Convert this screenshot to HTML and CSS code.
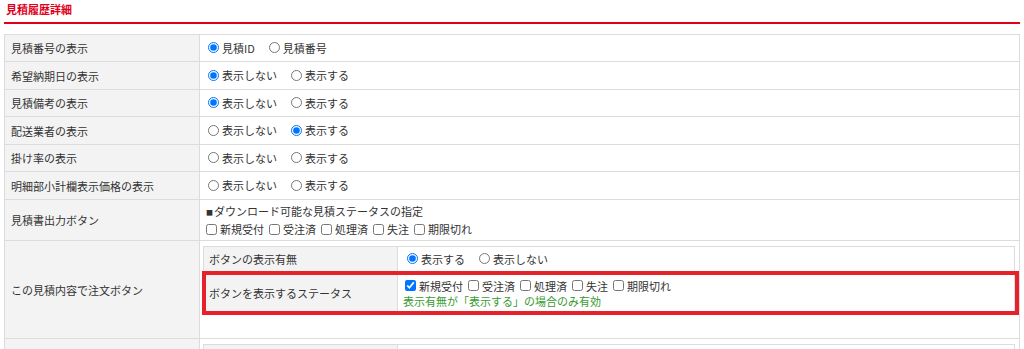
FILE: index.html
```html
<!DOCTYPE html>
<html lang="ja">
<head>
<meta charset="utf-8">
<title>見積履歴詳細</title>
<link rel="stylesheet" href="styles.css">
</head>
<body>
<div class="page">
  <h2 class="title">見積履歴詳細</h2>
  <table class="settings">
    <colgroup><col class="c-label"><col></colgroup>
    <tr class="h27">
      <th>見積番号の表示</th>
      <td><label class="opt"><input type="radio" name="r1" checked>見積ID</label><label class="opt"><input type="radio" name="r1">見積番号</label></td>
    </tr>
    <tr class="h28">
      <th>希望納期日の表示</th>
      <td><label class="opt"><input type="radio" name="r2" checked>表示しない</label><label class="opt"><input type="radio" name="r2">表示する</label></td>
    </tr>
    <tr class="h27">
      <th>見積備考の表示</th>
      <td><label class="opt"><input type="radio" name="r3" checked>表示しない</label><label class="opt"><input type="radio" name="r3">表示する</label></td>
    </tr>
    <tr class="h28">
      <th>配送業者の表示</th>
      <td><label class="opt"><input type="radio" name="r4">表示しない</label><label class="opt"><input type="radio" name="r4" checked>表示する</label></td>
    </tr>
    <tr class="h27">
      <th>掛け率の表示</th>
      <td><label class="opt"><input type="radio" name="r5">表示しない</label><label class="opt"><input type="radio" name="r5">表示する</label></td>
    </tr>
    <tr class="h28">
      <th>明細部小計欄表示価格の表示</th>
      <td><label class="opt"><input type="radio" name="r6">表示しない</label><label class="opt"><input type="radio" name="r6">表示する</label></td>
    </tr>
    <tr class="h41">
      <th>見積書出力ボタン</th>
      <td class="stack">
        <div class="note"><span class="sq">■</span>ダウンロード可能な見積ステータスの指定</div>
        <div class="checks"><label class="chk"><input type="checkbox">新規受付</label><label class="chk"><input type="checkbox">受注済</label><label class="chk"><input type="checkbox">処理済</label><label class="chk"><input type="checkbox">失注</label><label class="chk"><input type="checkbox">期限切れ</label></div>
      </td>
    </tr>
    <tr class="h97">
      <th>この見積内容で注文ボタン</th>
      <td class="nested">
        <div class="inner-wrap">
          <table class="inner">
            <colgroup><col class="c-inner"><col></colgroup>
            <tr class="h25">
              <th>ボタンの表示有無</th>
              <td><label class="opt"><input type="radio" name="r7" checked>表示する</label><label class="opt"><input type="radio" name="r7">表示しない</label></td>
            </tr>
            <tr class="h42">
              <th>ボタンを表示するステータス</th>
              <td class="stack">
                <div class="checks"><label class="chk"><input type="checkbox" checked>新規受付</label><label class="chk"><input type="checkbox">受注済</label><label class="chk"><input type="checkbox">処理済</label><label class="chk"><input type="checkbox">失注</label><label class="chk"><input type="checkbox">期限切れ</label></div>
                <div class="hint">表示有無が「表示する」の場合のみ有効</div>
              </td>
            </tr>
          </table>
          <div class="annot"></div>
        </div>
      </td>
    </tr>
    <tr class="h97">
      <th></th>
      <td class="nested">
        <table class="inner">
          <colgroup><col class="c-inner"><col></colgroup>
          <tr class="h25"><th></th><td></td></tr>
        </table>
      </td>
    </tr>
  </table>
</div>
</body>
</html>
```
FILE: styles.css
```css
* { box-sizing: border-box; }
html, body { margin: 0; padding: 0; background: #fff; }
body {
  font-family: "Noto Sans CJK JP", "Noto Sans", sans-serif;
  font-size: 11px;
  color: #333;
  overflow: hidden;
}
.title {
  margin: 0 4px;
  padding: 0 0 4px 2px;
  font-size: 11px;
  font-weight: bold;
  line-height: 18px;
  color: #e0001b;
  border-bottom: 2px solid #e0001b;
}
.settings {
  margin: 10px 4px 0;
  width: 1016px;
  border-collapse: collapse;
  table-layout: fixed;
}
.c-label { width: 195px; }
.settings th, .settings td {
  border: 1px solid #dcdcdc;
  vertical-align: middle;
  line-height: 16px;
}
.settings th {
  background: #f3f3f3;
  font-weight: normal;
  text-align: left;
  padding: 0 0 0 6px;
}
.settings td {
  background: #fff;
  padding: 0 0 0 8px;
}
.h27 { height: 27px; }
.h28 { height: 28px; }
.h41 { height: 41px; }
.h97 { height: 97px; }
.h25 { height: 25px; }
.h42 { height: 42px; }

.opt, .chk {
  display: inline-flex;
  align-items: center;
  margin-right: 14px;
}
.chk { margin-right: 5px; }
.opt input, .chk input {
  width: 11px;
  height: 11px;
  margin: 0 3px 0 0;
}
.stack { padding-top: 2px; }
.note { line-height: 17px; margin-left: -2px; }
.sq { font-size: 7px; margin-right: 1px; vertical-align: 1px; }
.checks { line-height: 16px; display: flex; margin-left: -2px; }
.hint { color: #3a9a2f; line-height: 14px; margin-left: -4px; }

.settings td.nested {
  padding: 5px 4px 24px 3px;
  vertical-align: top;
}
.inner-wrap { position: relative; }
.inner {
  width: 100%;
  border-collapse: collapse;
  table-layout: fixed;
}
.c-inner { width: 194px; }
.inner th { padding-left: 5px; }
.inner td { padding-left: 9px; }
.annot {
  position: absolute;
  left: -1px;
  top: 25px;
  width: 817px;
  height: 44px;
  border: 4px solid #e6212a;
  pointer-events: none;
}
```
